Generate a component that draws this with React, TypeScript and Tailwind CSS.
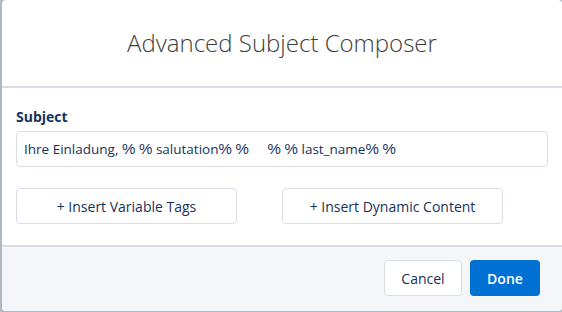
const Pct = () => (
  <span className="inline-block w-[17px] text-[15px] leading-none" style={{ fontFamily: '"Liberation Sans", sans-serif' }}>
    %
  </span>
);

const App = () => {
  return (
    <div className="h-screen w-full bg-[#b0b8c2] pl-[2px] pb-[1px]" style={{ fontFamily: '"Open Sans", sans-serif' }}>
      <div className="h-full flex flex-col bg-white rounded-[4px] overflow-hidden">
        <div className="h-[88px] flex items-center justify-center border-b-2 border-[#d8dde6] shrink-0">
          <h1 className="text-[24px] font-light text-[#3e3e3c]">Advanced Subject Composer</h1>
        </div>
        <div className="flex-1 px-[14px] pt-[19px]">
          <label className="block text-[14px] font-bold text-[#16325c] leading-[20px]">Subject</label>
          <div className="mt-[4px] h-[36px] w-[532px] flex items-center border border-[#d8dde6] rounded-[4px] px-[7px]">
            <span className="text-[13.5px] text-[#16325c] whitespace-pre">
              Ihre Einladung, <Pct /><Pct />salutation<Pct /><Pct />
              <span className="inline-block w-[15px]"> </span>
              <Pct /><Pct />last_name<Pct /><Pct />
            </span>
          </div>
          <div className="mt-[21px] flex gap-[45px]">
            <button className="w-[221px] h-[36px] border border-[#d8dde6] rounded-[4px] text-[14px] text-[#16325c] bg-white">
              + Insert Variable Tags
            </button>
            <button className="w-[221px] h-[36px] border border-[#d8dde6] rounded-[4px] text-[14px] text-[#16325c] bg-white">
              + Insert Dynamic Content
            </button>
          </div>
        </div>
        <div className="h-[66px] shrink-0 bg-[#f4f6f9] border-t-2 border-[#d8dde6] flex items-center justify-end gap-[8px] pr-[22px] pb-[2px]">
          <button className="w-[78px] h-[36px] bg-white border border-[#d8dde6] rounded-[4px] text-[14px] text-[#16325c]">
            Cancel
          </button>
          <button className="w-[70px] h-[36px] bg-[#0070d2] rounded-[4px] text-[14px] text-white font-semibold">
            Done
          </button>
        </div>
      </div>
    </div>
  );
};

export default App;
